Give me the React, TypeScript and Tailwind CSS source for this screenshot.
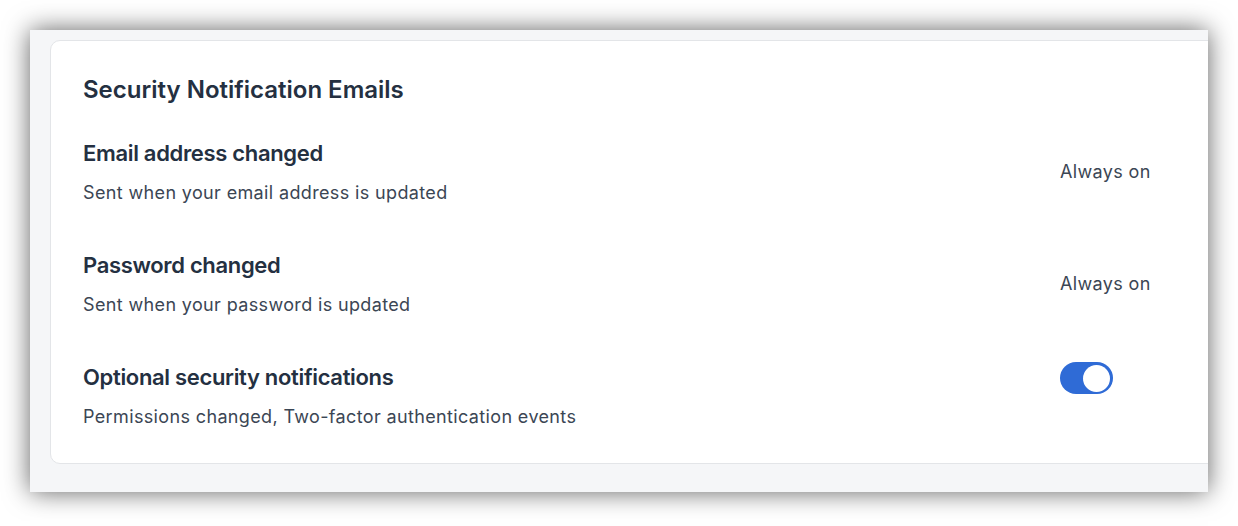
import { useState } from "react";

const rows = [
  { title: "Email address changed", desc: "Sent when your email address is updated", kind: "always" },
  { title: "Password changed", desc: "Sent when your password is updated", kind: "always" },
  { title: "Optional security notifications", desc: "Permissions changed, Two-factor authentication events", kind: "toggle" },
];

const Toggle = () => {
  const [on, setOn] = useState(true);
  return (
    <button
      onClick={() => setOn(!on)}
      className={`-mt-[1px] flex h-[32px] w-[53px] items-center rounded-full p-[3px] ${on ? "justify-end bg-[#2f6bd6]" : "justify-start bg-[#d1d5db]"}`}
    >
      <span className="block h-[27px] w-[27px] rounded-full bg-white" />
    </button>
  );
};

export default function App() {
  return (
    <div className="min-h-[526px] bg-white p-[30px] pb-[34px]" style={{ fontFamily: "Inter, 'Noto Sans', sans-serif" }}>
      {/* window */}
      <div className="h-[462px] w-[1178px] overflow-hidden bg-[#f5f6f8] shadow-[0_0_24px_rgba(0,0,0,0.62)]">
        <div className="ml-[20px] mt-[10px] w-[1200px] rounded-[10px] border border-[#e3e5e8] bg-white pb-[34px] pl-[32px] pr-[32px] pt-[33px]">
          <h2 className="text-[24px] font-semibold leading-[32px] text-[#243041]">
            Security Notification Emails
          </h2>

          <div className="mt-[33px] flex flex-col gap-[46px]">
            {rows.map((row) => (
              <div key={row.title} className={`flex justify-between ${row.kind === "toggle" ? "items-start" : "items-center"}`}>
                <div>
                  <div className="text-[22px] font-semibold leading-[28px] tracking-[-0.015em] text-[#243041]">{row.title}</div>
                  <div className="mt-[14px] text-[18px] leading-[24px] tracking-[0.02em] text-[#3b4654]">{row.desc}</div>
                </div>
                <div className="w-[157px]">
                  {row.kind === "always" ? (
                    <span className="text-[18px] leading-[24px] tracking-[0.02em] text-[#3b4654]">Always on</span>
                  ) : (
                    <Toggle />
                  )}
                </div>
              </div>
            ))}
          </div>
        </div>
      </div>
    </div>
  );
}
